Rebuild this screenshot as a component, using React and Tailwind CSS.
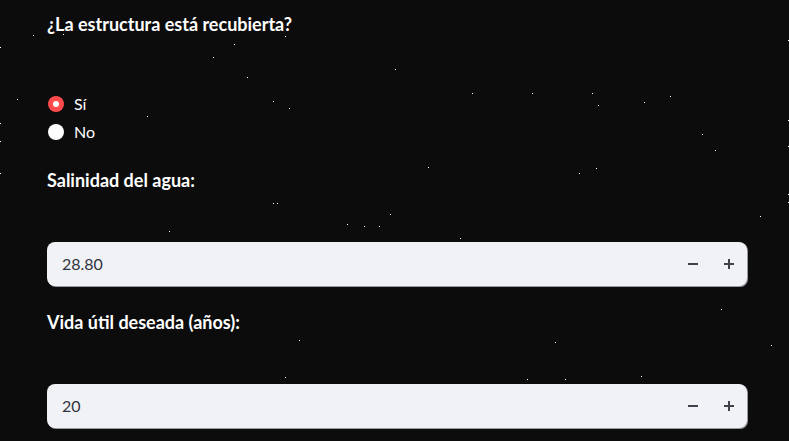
import React from "react";

const stars = [
  [33,35],[63,34],[285,36],[234,44],[213,57],[247,77],[17,99],[273,101],[289,108],[147,116],
  [0,47],[0,123],[0,141],[0,173],[273,203],[277,203],[390,214],[347,224],[364,226],[379,226],[169,231],
  [395,69],[472,93],[532,93],[592,93],[598,105],[644,102],[670,96],[702,134],[715,150],[428,167],[579,173],[596,168],[760,216],[460,238],
  [788,40],[788,120],[788,146],[788,194],[788,202],
  [721,309],[299,340],[555,342],[771,345],[641,376],[527,379],[565,379],[285,377],[543,390],[636,389],
  [130,394],[300,395],[355,397],[688,400],[196,407],[182,412],[319,407],[491,407],[734,404],[389,427],
];

function NumberInput({ value }) {
  return (
    <div className="h-[44px] w-full rounded-lg bg-[#f0f2f6] flex items-center shadow-[1px_1px_0_#9a9ca3]">
      <span className="flex-1 pl-[15px] text-[16px] text-[#31333f]">{value}</span>
      <button className="w-9 h-full flex items-center justify-center">
        <svg width="12" height="12" viewBox="0 0 12 12">
          <rect x="1" y="5" width="10" height="2" fill="#3f414b" />
        </svg>
      </button>
      <button className="w-9 h-full flex items-center justify-center">
        <svg width="12" height="12" viewBox="0 0 12 12">
          <rect x="1" y="5" width="10" height="2" fill="#3f414b" />
          <rect x="5" y="1" width="2" height="10" fill="#3f414b" />
        </svg>
      </button>
    </div>
  );
}

function Radio({ checked, label }) {
  return (
    <div className="h-6 flex items-center">
      {checked ? (
        <span className="w-4 h-4 rounded-full bg-[#ff4b4b] flex items-center justify-center ml-[1px]">
          <span className="w-1.5 h-1.5 rounded-full bg-white" />
        </span>
      ) : (
        <span className="w-4 h-4 rounded-full bg-white ml-[1px]" />
      )}
      <span className="ml-[10px] text-[16px] text-white">{label}</span>
    </div>
  );
}

export default function App() {
  return (
    <div
      className="relative min-h-screen h-[441px] overflow-hidden bg-[#0c0c0c]"
      style={{ fontFamily: "Lato, 'Noto Sans', sans-serif" }}
    >
      <svg className="absolute inset-0" width="789" height="441">
        {stars.map(([x, y], i) => (
          <rect key={i} x={x} y={y} width="1" height="1" fill="#ffffff" />
        ))}
      </svg>
      <div className="relative flex flex-col pl-[47px] pr-[42px] pt-3">
        <p className="h-6 leading-6 text-[18px] font-bold text-white">¿La estructura está recubierta?</p>
        <div className="mt-[56px] flex flex-col gap-1">
          <Radio checked label="Sí" />
          <Radio label="No" />
        </div>
        <p className="mt-6 h-6 leading-6 text-[18px] font-bold text-white">Salinidad del agua:</p>
        <div className="mt-[50px]">
          <NumberInput value="28.80" />
        </div>
        <p className="mt-6 h-6 leading-6 text-[18px] font-bold text-white">Vida útil deseada (años):</p>
        <div className="mt-[50px]">
          <NumberInput value="20" />
        </div>
      </div>
    </div>
  );
}
